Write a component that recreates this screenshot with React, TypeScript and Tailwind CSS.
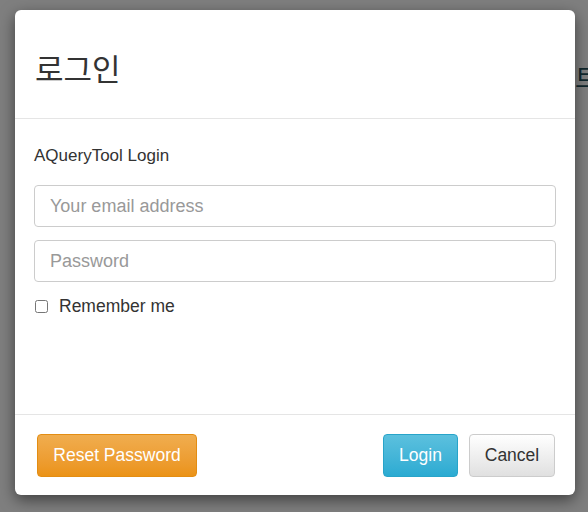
export default function App() {
  return (
    <div
      className="relative h-[512px] w-[588px] overflow-hidden bg-white"
      style={{ fontFamily: '"Liberation Sans", Arial, "Noto Sans CJK KR", sans-serif' }}
    >
      {/* page behind the backdrop */}
      <div className="absolute left-[575px] top-[66px] w-[13px] overflow-hidden whitespace-nowrap text-[26px] leading-none text-[#1f4f5a]">
        트
      </div>
      <div className="absolute inset-0 bg-black/50" />

      <div className="relative pl-[15px] pt-[10px]">
        <div className="w-[560px] overflow-hidden rounded-[6px] bg-white shadow-[0_5px_15px_rgba(0,0,0,0.5)]">
          <div className="flex h-[109px] items-center border-b border-[#e5e5e5] px-5 pt-[6px]">
            <h4
              className="text-[31px] font-normal leading-none text-[#333]"
              style={{ fontFamily: '"Noto Sans CJK KR", "Liberation Sans", sans-serif' }}
            >
              로그인
            </h4>
          </div>

          <div className="h-[295px] px-[19px] pt-[28px]">
            <p className="text-[17px] leading-[18px] text-[#333]">AQueryTool Login</p>
            <input
              type="text"
              placeholder="Your email address"
              className="mt-[20px] block h-[42px] w-full rounded-[4px] border border-[#ccc] px-[15px] text-[18px] text-[#555] outline-none placeholder:text-[#999]"
            />
            <input
              type="password"
              placeholder="Password"
              className="mt-[13px] block h-[42px] w-full rounded-[4px] border border-[#ccc] px-[15px] text-[18px] text-[#555] outline-none placeholder:text-[#999]"
            />
            <label className="mt-[14px] flex items-center gap-[11px] text-[17.5px] leading-[20px] text-[#333]">
              <input type="checkbox" className="ml-[1px] h-[13px] w-[13px]" />
              Remember me
            </label>
          </div>

          <div className="flex items-center border-t border-[#e5e5e5] pb-[18px] pl-[22px] pr-[20px] pt-[19px]">
            <button className="h-[43px] w-[160px] rounded-[4px] border border-[#e38d13] bg-gradient-to-b from-[#f0ad4e] to-[#eb9316] text-[17.5px] text-white">
              Reset Password
            </button>
            <div className="ml-auto flex gap-[11px]">
              <button className="h-[43px] w-[75px] rounded-[4px] border border-[#28a4c9] bg-gradient-to-b from-[#5bc0de] to-[#2aabd2] text-[17.5px] text-white">
                Login
              </button>
              <button className="h-[43px] w-[86px] rounded-[4px] border border-[#ccc] bg-gradient-to-b from-white to-[#e0e0e0] text-[17.5px] text-[#333]">
                Cancel
              </button>
            </div>
          </div>
        </div>
      </div>
    </div>
  );
}
